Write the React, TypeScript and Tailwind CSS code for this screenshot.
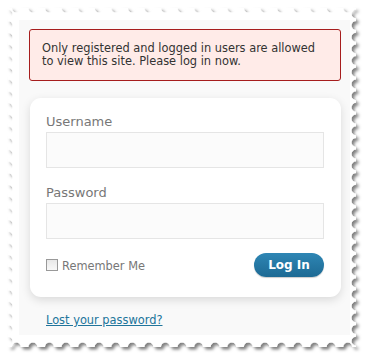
import React from "react";

// stamp outline: rectangle with round notches cut along every edge
function stampPath(w: number, h: number, nx: number, ny: number, r: number) {
  const sx = w / nx;
  const sy = h / ny;
  let d = `M0,0`;
  for (let i = 0; i < nx; i++) {
    const c = (i + 0.5) * sx;
    d += ` L${c - r},0 A${r},${r} 0 0 0 ${c + r},0`;
  }
  d += ` L${w},0`;
  for (let i = 0; i < ny; i++) {
    const c = (i + 0.5) * sy;
    d += ` L${w},${c - r} A${r},${r} 0 0 0 ${w},${c + r}`;
  }
  d += ` L${w},${h}`;
  for (let i = nx - 1; i >= 0; i--) {
    const c = (i + 0.5) * sx;
    d += ` L${c + r},${h} A${r},${r} 0 0 0 ${c - r},${h}`;
  }
  d += ` L0,${h}`;
  for (let i = ny - 1; i >= 0; i--) {
    const c = (i + 0.5) * sy;
    d += ` L0,${c + r} A${r},${r} 0 0 0 0,${c - r}`;
  }
  return d + " Z";
}

function Stamp() {
  return (
    <svg className="absolute inset-0" width="369" height="359" viewBox="0 0 369 359">
      <defs>
        <filter id="stampShadow" x="-5%" y="-5%" width="110%" height="110%">
          <feDropShadow dx="2.5" dy="2.5" stdDeviation="1.8" floodColor="#000" floodOpacity="0.5" />
        </filter>
      </defs>
      <g transform="translate(8,8)" filter="url(#stampShadow)">
        <path d={stampPath(348, 339, 21, 29, 4.5)} fill="#fff" />
      </g>
    </svg>
  );
}

export default function App() {
  const font = "font-['DejaVu_Sans',Verdana,sans-serif]";
  return (
    <div className={`relative w-[369px] h-[359px] bg-white overflow-hidden ${font}`}>
      <Stamp />
      <div className="relative ml-[19px] mt-[20px] w-[331px] h-[315px] bg-[#f9f9f9] pl-[10px] pt-[9px]">
        <div className="w-[312px] h-[52px] rounded-[3px] border border-[#a61d1d] bg-[#ffebe8] pl-[12px] pt-[12px] text-[11.4px] leading-[13px] text-[#333]">
          Only registered and logged in users are allowed
          <br />
          to view this site. Please log in now.
        </div>

        <div className="ml-px mt-[17px] w-[311px] h-[199px] rounded-[11px] bg-white pl-[16px] pr-[17px] pt-[15px] shadow-[0_3px_10px_rgba(0,0,0,0.13)]">
          <label className="block text-[13px] leading-[17px] text-[#777]">Username</label>
          <div className="mt-[2px] h-[36px] border border-[#e5e5e5] bg-[#fbfbfb]" />
          <label className="mt-[16px] block text-[13px] leading-[17px] text-[#777]">Password</label>
          <div className="mt-[2px] h-[36px] border border-[#e5e5e5] bg-[#fbfbfb]" />
          <div className="mt-[14px] flex items-center justify-between">
            <div className="flex items-center gap-[4px] text-[11.4px] text-[#777]">
              <span className="block w-[12px] h-[12px] border border-[#999] bg-gradient-to-b from-[#e8e8e8] to-[#f8f8f8]" />
              <span className="pt-[3px]">Remember Me</span>
            </div>
            <button className="h-[24px] w-[70px] rounded-full bg-gradient-to-b from-[#2e86b4] to-[#1d6a94] text-[12px] font-bold text-white shadow-[0_1px_1px_rgba(0,0,0,0.2)]">
              Log In
            </button>
          </div>
        </div>

        <a href="#" className="mt-[17px] ml-[17px] block text-[11.4px] leading-[13px] text-[#21759b] underline">
          Lost your password?
        </a>
      </div>
    </div>
  );
}
